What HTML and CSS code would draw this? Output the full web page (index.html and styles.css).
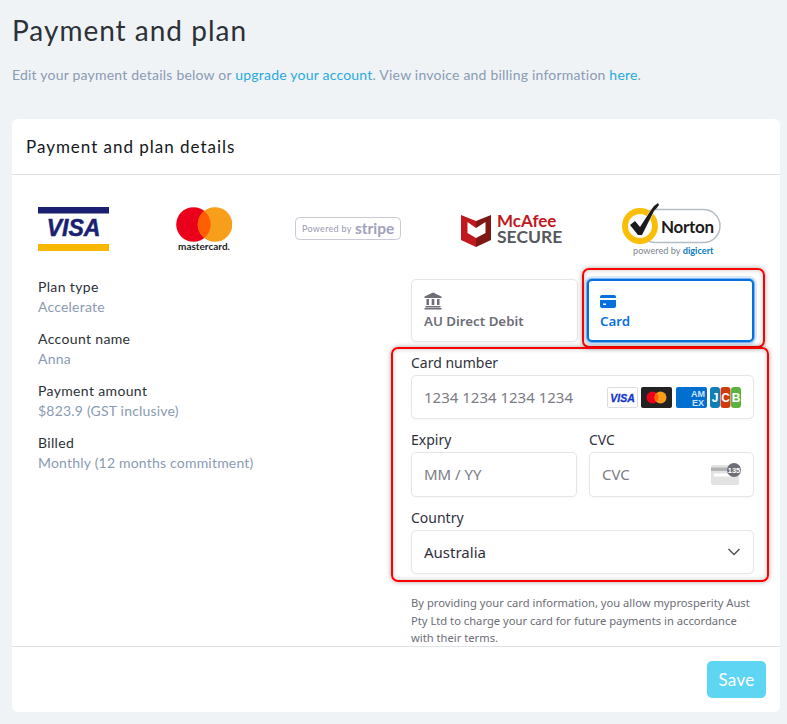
FILE: index.html
```html
<!DOCTYPE html>
<html lang="en">
<head>
<meta charset="utf-8">
<title>Payment and plan</title>
<link rel="stylesheet" href="styles.css">
</head>
<body>
<main class="page">
  <h1 class="title">Payment and plan</h1>
  <p class="intro">Edit your payment details below or <a href="#">upgrade your account</a>. View invoice and billing information <a href="#">here</a>.</p>
  <section class="card">
    <h2 class="card-head">Payment and plan details</h2>
    <div class="card-body">
      <div class="logos">
        <svg class="logo-visa" width="71" height="44" viewBox="0 0 71 44">
          <rect width="71" height="6.500" fill="#1a1f71"/>
          <rect y="37" width="71" height="7" fill="#f9b800"/>
          <text x="35.500" y="29" text-anchor="middle" class="t-visa">VISA</text>
        </svg>
        <svg class="logo-mc" width="56" height="44" viewBox="0 0 56 44">
          <circle cx="17.500" cy="17.500" r="17.300" fill="#eb001b"/>
          <circle cx="39" cy="17.500" r="17.300" fill="#f79e1b"/>
          <path d="M28.250 4a17.300 17.300 0 0 1 0 27a17.300 17.300 0 0 1 0-27z" fill="#ff5f00"/>
          <text x="28" y="43" text-anchor="middle" class="t-mc">mastercard.</text>
        </svg>
        <svg class="logo-stripe" width="106" height="23" viewBox="0 0 106 23">
          <rect x=".5" y=".5" width="105" height="22" rx="4" fill="#fff" stroke="#c9c9d8"/>
          <text x="7" y="14.500" class="t-pow">Powered by</text>
          <text x="60" y="16.500" class="t-stripe">stripe</text>
        </svg>
        <svg width="102" height="43" viewBox="0 -4 102 43">
          <path d="M1 3L16 9V35L1 28Z" fill="#c01a1f"/>
          <path d="M31 3L16 9V35L31 28Z" fill="#7f1714"/>
          <path d="M7.500 10L16 16L25.500 10V21L16 26L7.500 21Z" fill="#fff"/>
          <text x="37" y="15" class="t-mca">McAfee</text>
          <text x="37" y="31" class="t-sec">SECURE</text>
        </svg>
        <svg width="100" height="54" viewBox="0 0 100 54">
          <rect x="18" y="6.500" width="81" height="33" rx="16.500" fill="#fff" stroke="#b4bcc6" stroke-width="1.500"/>
          <circle cx="19" cy="23" r="15" fill="#fff" stroke="#fbbe07" stroke-width="6"/>
          <path class="tick" d="M9 22L14 18L19 24L30 7L33 3L37 0L38 2L35 6L33 8L21 32L17 32Z"/>
          <text x="40" y="30" class="t-nor">Norton</text>
          <text x="12" y="51" class="t-pb">powered by <tspan class="t-dc">digicert</tspan></text>
        </svg>
      </div>
      <div class="columns">
        <dl class="plan">
          <div class="plan-row"><dt>Plan type</dt><dd>Accelerate</dd></div>
          <div class="plan-row"><dt>Account name</dt><dd>Anna</dd></div>
          <div class="plan-row"><dt>Payment amount</dt><dd>$823.9 (GST inclusive)</dd></div>
          <div class="plan-row"><dt>Billed</dt><dd>Monthly (12 months commitment)</dd></div>
        </dl>
        <form class="pay">
          <div class="tabs">
            <div class="tab">
              <svg width="18" height="18" viewBox="0 0 18 18" fill="#6d6e78"><path d="M9 0.500L17.500 4.500V6H.5V4.500ZM2.500 7H5V13H2.500ZM7.700 7H10.300V13H7.700ZM13 7H15.500V13H13ZM1.500 14H16.500V15.500H1.500ZM.5 16H17.500V17.500H.5Z"/></svg>
              <span>AU Direct Debit</span>
            </div>
            <div class="tab tab-on">
              <svg width="16" height="13" viewBox="0 0 16 13" fill="#0570de"><path d="M2 0H14A2 2 0 0 1 16 2V3H0V2A2 2 0 0 1 2 0ZM0 5H16V11A2 2 0 0 1 14 13H2A2 2 0 0 1 0 11ZM3 8.500V10H6V8.500Z" fill-rule="evenodd"/></svg>
              <span>Card</span>
            </div>
          </div>
          <label class="lbl lbl-first">Card number</label>
          <div class="field">
            <span class="ph">1234 1234 1234 1234</span>
            <span class="brands">
              <svg width="31" height="21" viewBox="0 0 31 21"><rect x=".5" y=".5" width="30" height="20" rx="1.500" fill="#fff" stroke="#ddd"/><text x="15.500" y="14.500" text-anchor="middle" class="t-vi">VISA</text></svg>
              <svg width="31" height="21" viewBox="0 0 31 21"><rect width="31" height="21" rx="2" fill="#222"/><circle cx="11.500" cy="10.500" r="6" fill="#eb001b"/><circle cx="19.500" cy="10.500" r="6" fill="#f79e1b"/><path d="M15.500 6a6 6 0 0 1 0 9a6 6 0 0 1 0-9z" fill="#ff5f00"/></svg>
              <svg width="31" height="21" viewBox="0 0 31 21"><rect width="31" height="21" rx="2" fill="#016fd0"/><text x="22" y="10" text-anchor="middle" class="t-ax">AM</text><text x="22" y="18.500" text-anchor="middle" class="t-ax">EX</text></svg>
              <svg width="31" height="21" viewBox="0 0 31 21"><rect width="10" height="21" rx="3" fill="#0f7fb5"/><rect x="10.500" width="10" height="21" rx="3" fill="#d13a10"/><rect x="21" width="10" height="21" rx="3" fill="#5bb33f"/><text x="5" y="15" text-anchor="middle" class="t-jc">J</text><text x="15.500" y="15" text-anchor="middle" class="t-jc">C</text><text x="26" y="15" text-anchor="middle" class="t-jc">B</text></svg>
            </span>
          </div>
          <div class="split">
            <div class="split-cell">
              <label class="lbl">Expiry</label>
              <div class="field field-tall"><span class="ph">MM / YY</span></div>
            </div>
            <div class="split-cell">
              <label class="lbl">CVC</label>
              <div class="field field-tall">
                <span class="ph">CVC</span>
                <svg class="cvc-icon" width="30" height="22" viewBox="0 0 30 22">
                  <rect y="2" width="28" height="20" rx="2" fill="#e3e3e3"/>
                  <rect y="4.500" width="28" height="3.500" fill="#b3b3b3"/>
                  <rect x="3" y="10.500" width="20" height="3" fill="#fff"/>
                  <circle cx="23" cy="7" r="7" fill="#6d6e78"/>
                  <text x="23" y="9.800" text-anchor="middle" class="t-135">135</text>
                </svg>
              </div>
            </div>
          </div>
          <label class="lbl">Country</label>
          <div class="field">
            <span class="val">Australia</span>
            <svg class="chev" width="14" height="8" viewBox="0 0 14 8"><path d="M1.500 1L7 6.500L12.500 1" fill="none" stroke="#555" stroke-width="1.500"/></svg>
          </div>
          <p class="terms">By providing your card information, you allow myprosperity Aust Pty Ltd to charge your card for future payments in accordance with their terms.</p>
          <div class="mark mark-tab"></div>
          <div class="mark mark-form"></div>
        </form>
      </div>
    </div>
    <div class="card-foot"><button type="button" class="save">Save</button></div>
  </section>
</main>
</body>
</html>
```

FILE: styles.css
```css
* { box-sizing: border-box; }
html, body { margin: 0; height: 100%; }
body {
  background: #eff3f6;
  font-family: "Lato", sans-serif;
  overflow: hidden;
}
.page { padding: 0 7px 0 12px; }
.title {
  margin: 0;
  padding-top: 12px;
  font-size: 28px;
  line-height: 36px;
  font-weight: 400;
  letter-spacing: 1px;
  color: #2c3138;
}
.intro {
  margin: 18px 0 0;
  font-size: 14px;
  line-height: 18px;
  color: #8a9bb3;
  letter-spacing: .21px;
  height: 53px;
}
.intro a { color: #29aadf; text-decoration: none; }
.card {
  background: #fff;
  border-radius: 6px;
  height: 593px;
  display: flex;
  flex-direction: column;
}
.card-head {
  margin: 0;
  height: 56px;
  padding: 0 14px;
  display: flex;
  align-items: center;
  font-size: 17px;
  font-weight: 400;
  letter-spacing: .98px;
  color: #14171c;
  border-bottom: 1px solid #dfe2e6;
}
.card-body {
  height: 471px;
  padding: 28px 26px 0;
  overflow: hidden;
}
.logos {
  display: flex;
  align-items: center;
  gap: 59px;
  height: 53px;
}
.logos svg { flex: none; }
.logo-visa { margin-right: 8px; margin-top: -1px; }
.logo-mc { margin-right: 4px; margin-top: -1px; }
.logo-stripe { margin-top: -2px; }
.tick { fill: #1c1c1c; stroke: #fff; stroke-width: 1px; paint-order: stroke; }
.columns {
  display: flex;
  justify-content: space-between;
  margin-top: 21px;
}
.plan { margin: 0; }
.plan-row { height: 52px; font-size: 14px; line-height: 20px; }
.plan dt { color: #2c3138; height: 20px; letter-spacing: .35px; }
.plan dd { margin: 0; color: #8a9bb3; letter-spacing: .2px; }
.pay {
  position: relative;
  width: 343px;
  font-family: "Noto Sans", sans-serif;
  padding-top: 2px;
}
.tabs { display: flex; gap: 9px; }
.tab {
  width: 167px;
  height: 63px;
  padding: 12px 12px 0;
  border: 1px solid #e6e6e6;
  border-radius: 5px;
  background: #fff;
  box-shadow: 0 1px 3px rgba(0,0,0,.04);
  display: flex;
  flex-direction: column;
  font-size: 13.300px;
  font-weight: 600;
  color: #6d6e78;
}
.tab span { margin-top: 1px; line-height: 21px; }
.tab-on {
  color: #0570de;
  border: 2px solid #0570de;
  box-shadow: 0 0 0 1px rgba(5,112,222,.45), 0 0 0 3px rgba(5,112,222,.15);
  padding: 14px 11px 0;
}
.tab-on span { margin-top: 3px; }
.lbl {
  display: block;
  font-size: 14px;
  line-height: 19px;
  margin: 11px 0 3px;
  color: #30313d;
}
.lbl-first { margin-top: 11px; }
.field {
  height: 44px;
  padding: 0 12px;
  border: 1px solid #e6e6e6;
  border-radius: 5px;
  background: #fff;
  box-shadow: 0 1px 3px rgba(0,0,0,.04);
  display: flex;
  align-items: center;
  justify-content: space-between;
  font-size: 15px;
}
.field-tall { height: 45px; }
.field-tall .ph { margin-top: -2px; }
.ph { color: #7b7c85; }
.val { color: #30313d; }
.brands { display: flex; gap: 3.500px; }
.split { display: flex; gap: 12px; }
.split-cell { flex: 1; }
.split-cell:first-child { flex: none; width: 166px; }
.cvc-icon { margin-top: -1px; }
.terms {
  margin: 20px 0 0;
  font-size: 11.200px;
  line-height: 17.500px;
  color: #6d6e78;
}
.mark {
  position: absolute;
  border: 2px solid #f00;
  border-radius: 7px;
  box-shadow: 0 0 5px rgba(0,0,0,.35), inset 0 0 5px rgba(0,0,0,.22);
  pointer-events: none;
}
.mark-tab { left: 171px; top: -9px; width: 183px; height: 80px; }
.mark-form { left: -20px; top: 70px; width: 378px; height: 235px; }
.card-foot {
  border-top: 1px solid #dfe2e6;
  flex: 1;
  display: flex;
  justify-content: flex-end;
  align-items: flex-start;
  padding: 14px 14px 0 0;
}
.save {
  width: 59px;
  height: 37px;
  padding: 0;
  border: 0;
  border-radius: 5px;
  background: #5fd5f4;
  color: #fff;
  font-family: "Lato", sans-serif;
  font-size: 17px;
  letter-spacing: .3px;
}
.t-visa { font: italic 700 23px "Liberation Sans", sans-serif; fill: #1a1f71; stroke: #1a1f71; stroke-width: .5px; }
.t-mc { font: 700 10px "Lato", sans-serif; fill: #222; }
.t-pow { font: 400 9px "Lato", sans-serif; fill: #9a9ab0; letter-spacing: .3px; }
.t-stripe { font: 700 15.500px "Lato", sans-serif; fill: #a2a2bb; }
.t-mca { font: 700 17px "Lato", sans-serif; fill: #c01a1f; }
.t-sec { font: 700 17.500px "Lato", sans-serif; fill: #55585c; }
.t-nor { font: 700 17px "Lato", sans-serif; fill: #1c1c1c; letter-spacing: -.3px; }
.t-pb { font: 400 9.200px "Lato", sans-serif; fill: #7d868f; }
.t-dc { font-weight: 700; fill: #0a7bbf; }
.t-vi { font: italic 700 10.500px "Liberation Sans", sans-serif; fill: #1434cb; stroke: #1434cb; stroke-width: .3px; }
.t-ax { font: 700 9px "Liberation Sans", sans-serif; fill: #cfe4f7; }
.t-jc { font: 700 12px "Liberation Sans", sans-serif; fill: #fff; }
.t-135 { font: 700 7.500px "Liberation Sans", sans-serif; fill: #fff; }
```
